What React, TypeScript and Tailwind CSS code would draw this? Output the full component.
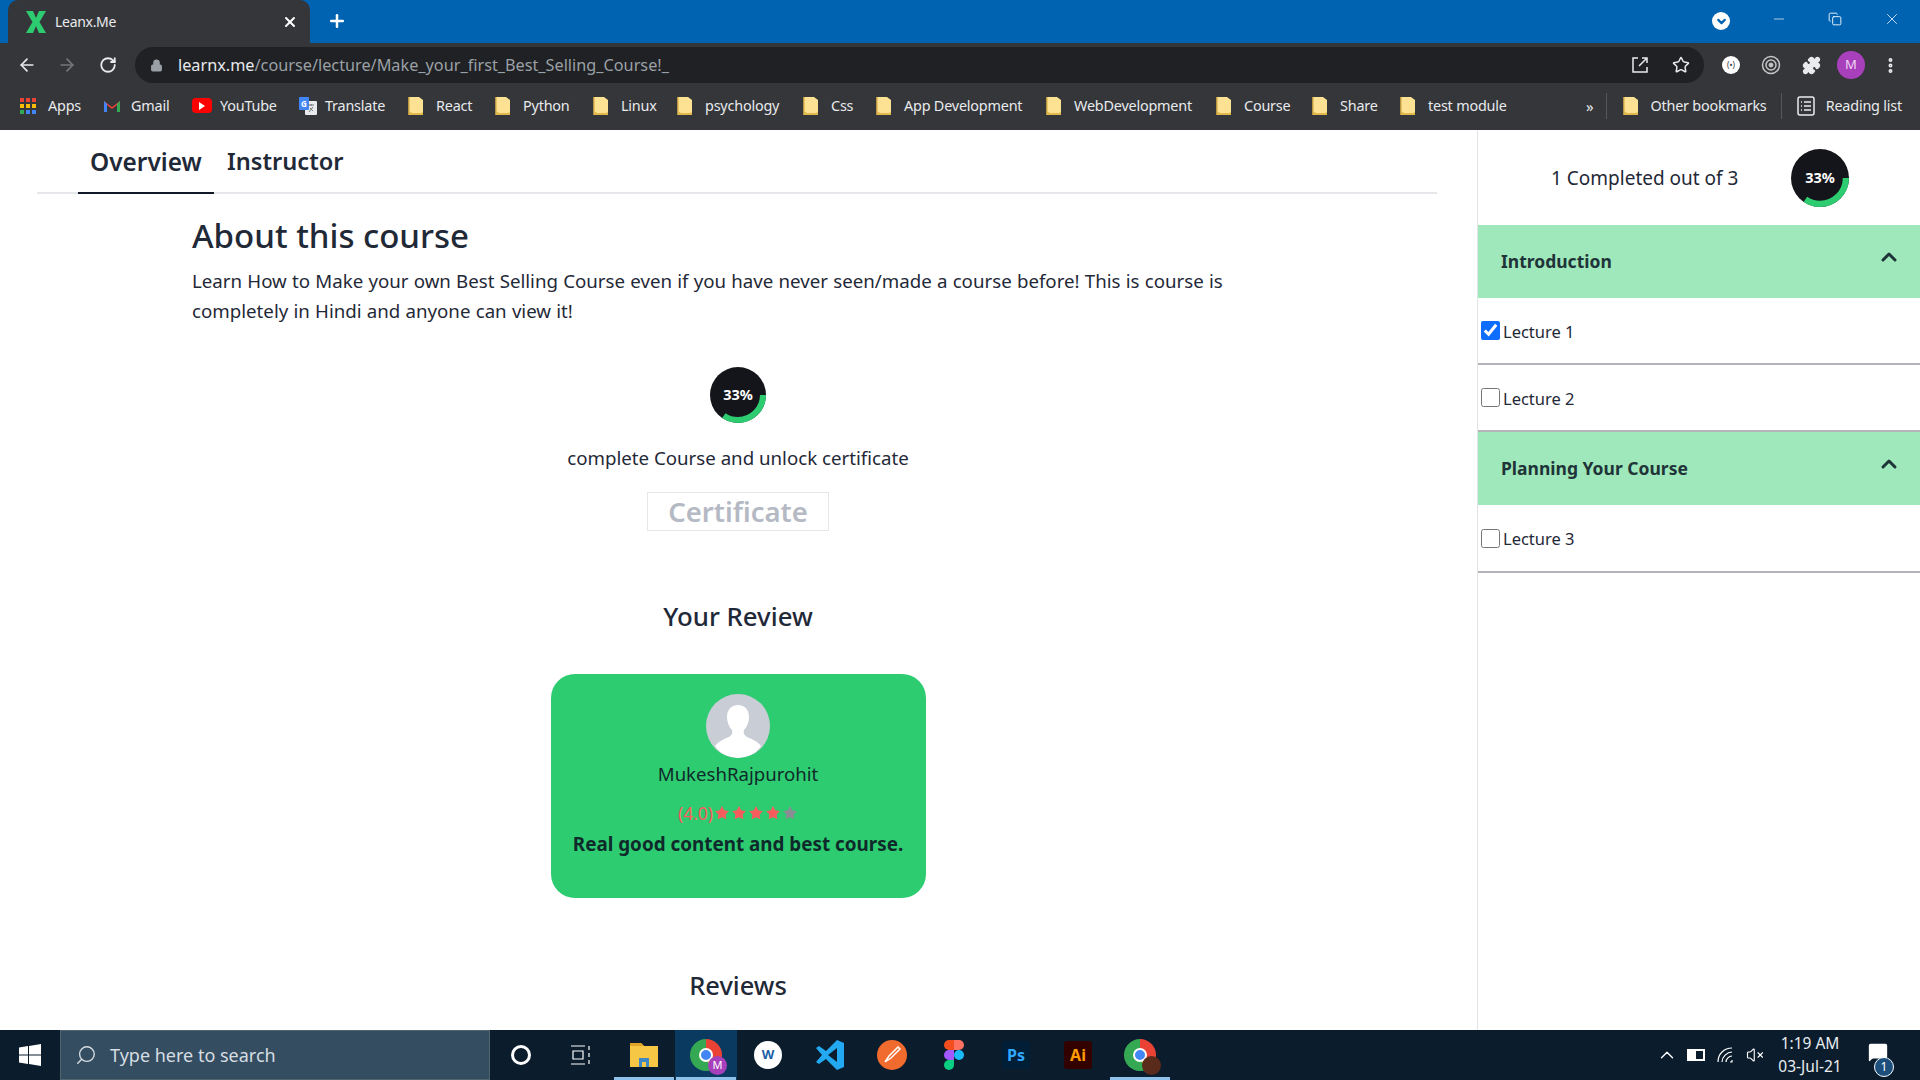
import React from 'react';
import { ArrowLeft, ArrowRight, RotateCw, Lock, Star, Puzzle, Plus, X, Minus, Copy, ChevronUp, ChevronDown, EllipsisVertical, Search, VolumeX, MessageSquare } from 'lucide-react';

const font = 'font-["Noto_Sans","Open_Sans",sans-serif]';

const Folder = () => (
  <svg width="16" height="20" viewBox="0 0 16 20" className="shrink-0">
    <path d="M1 1h10l4 3v15H1z" fill="#fde293" />
    <path d="M1 19h14v-3l-2 1H4L1 15z" fill="#e0b84c" />
    <path d="M1 1v18" stroke="#e0b84c" strokeWidth="1.5" />
  </svg>
);

const AppsIcon = () => (
  <div className="grid grid-cols-3 gap-[2px] w-[16px] shrink-0">
    {['#ea4335', '#ea4335', '#ea4335', '#fbbc04', '#fbbc04', '#fbbc04', '#34a853', '#4285f4', '#4285f4'].map((c, i) => (
      <span key={i} className="h-[4px] w-[4px]" style={{ background: c }} />
    ))}
  </div>
);

const GmailIcon = () => (
  <svg width="18" height="14" viewBox="0 0 18 14" className="shrink-0">
    <path d="M1 13V2l8 6 8-6v11h-3V6l-5 4-5-4v7z" fill="#ea4335" />
    <path d="M1 13V2l3 3v8z" fill="#4285f4" />
    <path d="M17 13V2l-3 3v8z" fill="#34a853" />
  </svg>
);

const YoutubeIcon = () => (
  <div className="w-[20px] h-[15px] rounded-[4px] bg-[#f00] flex items-center justify-center shrink-0">
    <span className="w-0 h-0 border-y-[4px] border-y-transparent border-l-[6px] border-l-white" />
  </div>
);

const TranslateIcon = () => (
  <svg width="20" height="20" viewBox="0 0 20 20" className="shrink-0">
    <rect x="7" y="5" width="12" height="14" rx="1" fill="#e8eaed" />
    <rect x="1" y="1" width="10" height="13" rx="1" fill="#4285f4" />
    <text x="3" y="11" fontSize="8" fill="#fff" fontWeight="700">G</text>
    <path d="M10 9h6M13 8v2M11 16l4-5M12 12l3 3" stroke="#70757a" strokeWidth="1" fill="none" />
  </svg>
);

const bookmarks: { label: string; icon: React.ReactNode; w: string; gap: string }[] = [
  { label: 'Apps', icon: <AppsIcon />, w: 'w-[83px]', gap: 'gap-[12px]' },
  { label: 'Gmail', icon: <GmailIcon />, w: 'w-[89px]', gap: 'gap-[10px]' },
  { label: 'YouTube', icon: <YoutubeIcon />, w: 'w-[106px]', gap: 'gap-[8px]' },
  { label: 'Translate', icon: <TranslateIcon />, w: 'w-[110px]', gap: 'gap-[7px]' },
  { label: 'React', icon: <Folder />, w: 'w-[87px]', gap: 'gap-[12px]' },
  { label: 'Python', icon: <Folder />, w: 'w-[98px]', gap: 'gap-[12px]' },
  { label: 'Linux', icon: <Folder />, w: 'w-[84px]', gap: 'gap-[12px]' },
  { label: 'psychology', icon: <Folder />, w: 'w-[126px]', gap: 'gap-[12px]' },
  { label: 'Css', icon: <Folder />, w: 'w-[73px]', gap: 'gap-[12px]' },
  { label: 'App Development', icon: <Folder />, w: 'w-[170px]', gap: 'gap-[12px]' },
  { label: 'WebDevelopment', icon: <Folder />, w: 'w-[170px]', gap: 'gap-[12px]' },
  { label: 'Course', icon: <Folder />, w: 'w-[96px]', gap: 'gap-[12px]' },
  { label: 'Share', icon: <Folder />, w: 'w-[88px]', gap: 'gap-[12px]' },
  { label: 'test module', icon: <Folder />, w: 'w-[120px]', gap: 'gap-[12px]' },
];

const ChromeFrame = () => (
  <header className="shrink-0">
    <div className="h-[43px] bg-[#0063b1] flex items-end pl-[8px] pr-[12px] text-white">
      <div className="w-[302px] h-[43px] bg-[#35363a] rounded-t-[10px] flex items-center pl-[16px] pr-[12px]">
        <svg width="24" height="24" viewBox="0 0 24 24" className="shrink-0">
          <path d="M2 1h7l3 7 3-7h7l-6.500 11L22 23h-7l-3-7-3 7H2l6.500-11z" fill="#2ecc71" />
        </svg>
        <span className="ml-[7px] text-[14px] text-[#e8eaed] tracking-[-0.3px]">Leanx.Me</span>
        <X size={16} strokeWidth={3} className="ml-auto" />
      </div>
      <Plus size={20} strokeWidth={3} className="ml-[17px] mb-[12px]" />
      <div className="ml-auto flex items-center h-full">
        <span className="w-[18px] h-[18px] rounded-full bg-white flex items-center justify-center mt-[-1px]">
          <ChevronDown size={13} strokeWidth={4} className="text-[#0063b1]" />
        </span>
        <Minus size={16} strokeWidth={1} className="ml-[41px] mb-[6px]" />
        <Copy size={14} strokeWidth={1.5} className="ml-[41px] mb-[6px]" />
        <X size={18} strokeWidth={1} className="ml-[41px] mb-[6px] mr-[7px]" />
      </div>
    </div>
    <div className="h-[44px] bg-[#35363a] flex items-center pl-[17px] pr-[11px]">
      <ArrowLeft size={20} className="text-[#e8eaed]" />
      <ArrowRight size={20} className="ml-[20px] text-[#75777b]" />
      <RotateCw size={18} strokeWidth={2.4} className="ml-[22px] text-[#e8eaed]" />
      <div className="ml-[18px] w-[1569px] h-[36px] rounded-full bg-[#202124] flex items-center pl-[15px] pr-[14px]">
        <Lock size={13} fill="#9aa0a6" className="text-[#9aa0a6]" />
        <span className="ml-[15px] text-[16.250px] text-[#e8eaed]">
          learnx.me<span className="text-[#9aa0a6]">/course/lecture/Make_your_first_Best_Selling_Course!_</span>
        </span>
        <svg width="18" height="18" viewBox="0 0 18 18" fill="none" stroke="#e8eaed" strokeWidth="1.500" className="ml-auto">
          <path d="M7 2H2v14h14v-5M8 10l8-8M11 2h5v5" />
        </svg>
        <Star size={18} className="ml-[23px] text-[#e8eaed]" />
      </div>
      <div className="ml-[18px] w-[18px] h-[18px] rounded-full bg-white flex items-center justify-center text-[8px] text-[#35363a]">(•)</div>
      <svg width="20" height="20" viewBox="0 0 20 20" className="ml-[21px]" fill="none" stroke="#c4c7c5">
        <circle cx="10" cy="10" r="8.500" strokeWidth="1.500" />
        <circle cx="10" cy="10" r="5" strokeWidth="1.500" />
        <circle cx="10" cy="10" r="2" fill="#c4c7c5" />
      </svg>
      <Puzzle size={19} fill="#e8eaed" className="ml-[21px] text-[#e8eaed]" />
      <span className="ml-[16px] w-[28px] h-[28px] rounded-full bg-[#a83fbb] flex items-center justify-center text-[13px] text-[#f1d6f6]">M</span>
      <EllipsisVertical size={19} strokeWidth={3} className="ml-[16px] text-[#e8eaed]" />
    </div>
    <div className="h-[43px] bg-[#35363a] flex items-center pb-[5px] pl-[20px] pr-[18px] text-[14.400px] tracking-[-0.2px] text-[#e8eaed]">
      {bookmarks.map(b => (
        <div key={b.label} className={`flex items-center shrink-0 ${b.gap} ${b.w}`}>
          {b.icon}
          <span className="whitespace-nowrap">{b.label}</span>
        </div>
      ))}
      <span className="ml-[66px] text-[15px]">»</span>
      <div className="ml-[13px] w-px h-[26px] bg-[#55575b]" />
      <div className="ml-[16px] flex items-center gap-[11px]">
        <Folder />
        <span className="whitespace-nowrap">Other bookmarks</span>
      </div>
      <div className="ml-[14px] w-px h-[26px] bg-[#55575b]" />
      <div className="ml-auto flex items-center gap-[11px]">
        <svg width="18" height="20" viewBox="0 0 18 20" fill="none" stroke="#e8eaed" strokeWidth="1.500">
          <rect x="1" y="1" width="16" height="18" rx="2" />
          <path d="M7 6h7M7 10h7M7 14h7M4 6h1M4 10h1M4 14h1" />
        </svg>
        <span className="whitespace-nowrap">Reading list</span>
      </div>
    </div>
  </header>
);

const ProgressRing = ({ size }: { size: 56 | 58 }) => (
  <div className={`relative rounded-full bg-[#14151a] flex items-center justify-center ${size === 56 ? 'w-[56px] h-[56px]' : 'w-[58px] h-[58px]'}`}>
    <svg viewBox="0 0 56 56" className="absolute inset-0 w-full h-full">
      <circle cx="28" cy="28" r="25" fill="none" stroke="#2ecc71" strokeWidth="6" strokeDasharray="54 200" />
    </svg>
    <span className="relative text-[14.500px] font-bold text-white">33%</span>
  </div>
);

const Avatar = () => (
  <div className="w-[64px] h-[64px] rounded-full bg-[#c9cdd6] overflow-hidden">
    <svg viewBox="0 0 64 64" className="w-full h-full">
      <path d="M32 11c-7 0-11 5-11 12 0 5 2 10 5 13 1 3 0 5-3 7-5 2-10 4-14 9 5 8 14 12 23 12s18-4 23-12c-4-5-9-7-14-9-3-2-4-4-3-7 3-3 5-8 5-13 0-7-4-12-11-12z" fill="#fff" />
    </svg>
  </div>
);

const Stars = () => (
  <span className="inline-flex items-center gap-[1px] ml-[1px]">
    {[0, 1, 2, 3, 4].map(i => (
      <Star key={i} size={16} fill="currentColor" strokeWidth={0} className={i < 4 ? 'text-[#f95c5c]' : 'text-[#8a8d93]'} />
    ))}
  </span>
);

const MainPane = () => (
  <main className="w-[1477px] shrink-0 overflow-hidden">
    <div className="mx-[37px] w-[1400px] h-[64px] border-b-2 border-[#e5e7eb] flex pl-[41px] items-stretch text-[24.400px] font-semibold text-[#1f2937]">
      <div className="px-[12px] pt-[14px] w-[136px] -mb-[2px] border-b-2 border-[#111827]">Overview</div>
      <div className="ml-[13px] pt-[14px] text-[23.600px]">Instructor</div>
    </div>
    <section className="pl-[192px] pr-[193px] pt-[17px] text-[#1f2937]">
      <h1 className="text-[33px] leading-[50px] font-medium">About this course</h1>
      <p className="text-[18.700px] leading-[30px] w-[1060px] mt-[5px] [word-spacing:0.35px]">
        Learn How to Make your own Best Selling Course even if you have never seen/made a course before! This is course is completely in Hindi and anyone can view it!
      </p>
      <div className="flex flex-col items-center mt-[41px]">
        <ProgressRing size={56} />
        <p className="text-[18.700px] leading-[30px] mt-[20px]">complete Course and unlock certificate</p>
        <div className="mt-[19px] w-[182px] h-[39px] border border-[#e5e7eb] flex items-center justify-center text-[27.500px] font-semibold text-[#b5b9c4]">Certificate</div>
        <h2 className="mt-[65px] text-[25.800px] leading-[40px] font-medium">Your Review</h2>
        <div className="mt-[38px] w-[375px] h-[224px] rounded-[24px] bg-[#2ecc71] flex flex-col items-center pt-[20px] text-[#0f2a2a]">
          <Avatar />
          <p className="mt-[1px] text-[18.600px] leading-[30px]">MukeshRajpurohit</p>
          <div className="mt-[13px] h-[22px] flex items-center text-[17.500px] text-[#f95c5c]">(4.0)<Stars /></div>
          <p className="mt-[6px] text-[18.850px] leading-[28px] font-bold whitespace-nowrap">Real good content and best course.</p>
        </div>
        <h2 className="mt-[67px] text-[25.500px] leading-[40px] font-medium">Reviews</h2>
      </div>
    </section>
  </main>
);

const Lecture = ({ title, checked, tall }: { title: string; checked?: boolean; tall?: boolean }) => (
  <label className={`border-b-2 border-[#b4b5b8] flex items-center pl-[3px] text-[16.500px] text-[#1f2937] ${tall ? 'h-[68px]' : 'h-[67px]'}`}>
    <input type="checkbox" defaultChecked={checked} className="w-[19px] h-[19px] accent-[#0d6efd]" />
    <span className="ml-[3px] pt-[3px]">{title}</span>
  </label>
);

const Section = ({ title }: { title: string }) => (
  <div className="h-[73px] bg-[#9fe8bb] flex pl-[23px] pr-[19px] items-center justify-between text-[17.500px] font-bold text-[#1f3438]">
    {title}
    <ChevronUp size={24} strokeWidth={3} className="mb-[9px]" />
  </div>
);

const Sidebar = () => (
  <aside className="flex-1 border-l border-[#e2e3e5] overflow-hidden">
    <div className="h-[95px] flex items-center pl-[73px] text-[19px] text-[#1f2937]">
      <span className="w-[240px] whitespace-nowrap pt-[1px]">1 Completed out of 3</span>
      <ProgressRing size={58} />
    </div>
    <Section title="Introduction" />
    <Lecture title="Lecture 1" checked />
    <Lecture title="Lecture 2" />
    <Section title="Planning Your Course" />
    <Lecture title="Lecture 3" tall />
  </aside>
);

const Tile = ({ children, active, open }: { children: React.ReactNode; active?: boolean; open?: boolean }) => (
  <div className={`relative w-[62px] h-full shrink-0 flex items-center justify-center ${active ? 'bg-[#0a3a60]' : ''}`}>
    {children}
    {open && <span className="absolute bottom-0 left-[1px] right-[1px] h-[3px] bg-[#8fc2ea]" />}
  </div>
);

const ChromeLogo = ({ badge }: { badge: string }) => (
  <div className="relative w-[32px] h-[32px] rounded-full" style={{ background: 'conic-gradient(#ea4335 0 30%, #fbbc04 30% 45%, #34a853 45% 100%)' }}>
    <span className="absolute left-[9px] top-[9px] w-[14px] h-[14px] rounded-full bg-[#4285f4] border-2 border-white" />
    <span className="absolute right-[-5px] bottom-[-4px] w-[19px] h-[19px] rounded-full flex items-center justify-center text-[11px] text-white" style={{ background: badge }}>{badge === '#a83fbb' ? 'M' : ''}</span>
  </div>
);

const Taskbar = () => (
  <footer className="h-[50px] shrink-0 bg-[#0b1c2c] flex items-center text-white">
    <div className="w-[60px] flex justify-center">
      <svg width="22" height="22" viewBox="0 0 22 22" fill="#fff"><path d="M0 3.500 9 2v8.500H0zM10 2l12-2v10.500H10zM0 11.500h9V20l-9-1.500zM10 11.500h12V22l-12-2z" /></svg>
    </div>
    <div className="w-[430px] h-full bg-[#354d60] border border-[#50646f] flex items-center pl-[14px] text-[18px] text-[#d5dde3]">
      <Search size={22} strokeWidth={1.5} className="-scale-x-100" />
      <span className="ml-[13px]">Type here to search</span>
    </div>
    <div className="w-[61px] flex justify-center"><span className="w-[20px] h-[20px] rounded-full border-[3px] border-white" /></div>
    <div className="w-[60px] flex justify-center">
      <svg width="22" height="20" viewBox="0 0 22 20" fill="none" stroke="#fff" strokeWidth="1.200"><path d="M1 1h14M1 19h14M3 6h10v8H3zM19 1v4M19 8v4M19 15v4" /></svg>
    </div>
    <div className="flex h-full ml-[2px]">
      <Tile open>
        <svg width="30" height="28" viewBox="0 0 30 28"><path d="M1 2h11l3 3h14v21H1z" fill="#f6c744" /><path d="M1 2h11l3 3H1z" fill="#e0a526" /><path d="M10 17h10v9h-3v-5h-4v5h-3z" fill="#3f88c5" /></svg>
      </Tile>
      <Tile active open><ChromeLogo badge="#a83fbb" /></Tile>
      <Tile>
        <div className="w-[28px] h-[28px] rounded-full bg-white flex items-center justify-center text-[13px] font-bold text-[#1c5fa8]">W</div>
      </Tile>
      <Tile>
        <svg width="32" height="32" viewBox="0 0 32 32"><path d="M23 1 12 12 5 7 2 9l6 7-6 7 3 2 7-5 11 11 7-3V4z" fill="#23a9f2" /><path d="M23 9v14l-9-7z" fill="#0b1c2c" /></svg>
      </Tile>
      <Tile>
        <div className="w-[30px] h-[30px] rounded-full bg-[#f26b2e] flex items-center justify-center">
          <svg width="20" height="20" viewBox="0 0 20 20" fill="none" stroke="#fff" strokeWidth="1.500"><path d="M16 2 7 11l-4 6 6-4 9-9z" /></svg>
        </div>
      </Tile>
      <Tile>
        <svg width="20" height="30" viewBox="0 0 20 30">
          <path d="M10 0H5a5 5 0 0 0 0 10h5z" fill="#f24e1e" />
          <path d="M10 0h5a5 5 0 0 1 0 10h-5z" fill="#ff7262" />
          <path d="M10 10H5a5 5 0 0 0 0 10h5z" fill="#a259ff" />
          <circle cx="15" cy="15" r="5" fill="#1abcfe" />
          <path d="M10 20H5a5 5 0 1 0 5 5z" fill="#0acf83" />
        </svg>
      </Tile>
      <Tile>
        <div className="w-[28px] h-[28px] rounded-[3px] bg-[#001e36] flex items-center justify-center text-[16px] font-bold text-[#31a8ff]">Ps</div>
      </Tile>
      <Tile>
        <div className="w-[28px] h-[28px] rounded-[3px] bg-[#330000] flex items-center justify-center text-[16px] font-bold text-[#ff9a00]">Ai</div>
      </Tile>
      <Tile open><ChromeLogo badge="#5a2a1a" /></Tile>
    </div>
    <div className="ml-auto flex items-center h-full">
      <ChevronUp size={22} strokeWidth={1.5} />
      <div className="ml-[9px] w-[18px] h-[12px] border-2 border-white flex"><span className="w-[7px] bg-white" /></div>
      <svg width="18" height="18" viewBox="0 0 18 18" fill="none" stroke="#fff" strokeWidth="1.200" className="ml-[11px]">
        <path d="M2 16C2 8 8 2 16 2M6 16c0-5 5-10 10-10M10 16c0-3 3-6 6-6M14 16h2v-2" />
      </svg>
      <VolumeX size={18} strokeWidth={1.5} className="ml-[12px]" />
      <div className="ml-[8px] w-[76px] flex flex-col items-center text-[15.500px] leading-[23px] text-[#e8edf1]">
        <span>1:19 AM</span>
        <span>03-Jul-21</span>
      </div>
      <div className="relative ml-[14px] mr-[26px] w-[32px] h-full flex items-center justify-center">
        <MessageSquare size={22} fill="#fff" strokeWidth={0} className="mb-[6px]" />
        <span className="absolute right-[0px] bottom-[3px] w-[20px] h-[20px] rounded-full bg-[#1c4f7c] border border-white flex items-center justify-center text-[12px]">1</span>
      </div>
    </div>
  </footer>
);

export default function App() {
  return (
    <div className={`h-screen flex flex-col overflow-hidden bg-white ${font}`}>
      <ChromeFrame />
      <div className="flex-1 min-h-0 flex">
        <MainPane />
        <Sidebar />
      </div>
      <Taskbar />
    </div>
  );
}
